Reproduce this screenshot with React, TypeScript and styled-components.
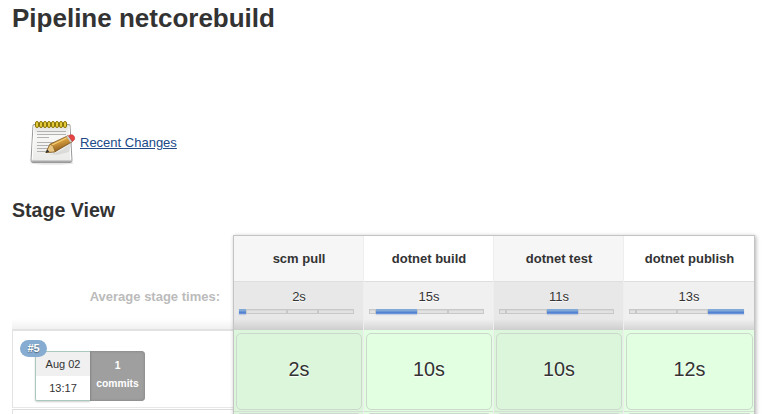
import React from 'react';
import styled, { createGlobalStyle } from 'styled-components';

const GlobalStyle = createGlobalStyle`
  *, *::before, *::after { box-sizing: border-box; }
  html, body { margin: 0; background: #fff; }
  body {
    font-family: "Liberation Sans", Arial, sans-serif;
    font-size: 13px;
    color: #333;
    overflow: hidden;
  }
`;

const Page = styled.main`
  height: 414px;
  padding: 0 12px;
  overflow: hidden;
`;

const Title = styled.h1`
  margin: 0;
  padding-top: 2px;
  height: 119px;
  font-size: 26px;
  line-height: 32px;
  white-space: nowrap;
`;

const ChangesRow = styled.div`
  display: flex;
  align-items: center;
  height: 48px;
  padding-left: 16px;
`;

const ChangesLink = styled.a`
  margin: 0 0 1px 4px;
  font-size: 13px;
  line-height: 16px;
  color: #204a87;
  text-decoration: underline;
`;

const Subtitle = styled.h2`
  margin: 0;
  padding-top: 31px;
  height: 68px;
  font-size: 19.6px;
  line-height: 24px;
`;

const StageView = styled.section`
  display: flex;
  height: 200px;
`;

const Runs = styled.div`
  width: 221px;
  flex: none;
`;

const AverageLabel = styled.div`
  height: 96px;
  padding: 54px 13px 0 0;
  text-align: right;
  font-weight: bold;
  line-height: 16px;
  color: #bbb;
  border-bottom: 2px solid #e2e2e2;
  background: linear-gradient(to top, #f1f1f1, #fff 10px);
`;

const Run = styled.div`
  height: 77px;
  border-left: 1px solid #e3e3e3;
  border-bottom: 1px solid #e8e8e8;
  padding: 20px 0 0 22px;
  display: flex;
`;

const NextRun = styled.div`
  height: 20px;
  margin-top: 1px;
  border-left: 1px solid #e3e3e3;
  border-top: 1px solid #ddd;
`;

const When = styled.div`
  position: relative;
  width: 55px;
  height: 50px;
  border: 1px solid #a9c9bc;
  border-right: 0;
  border-radius: 2px 0 0 2px;
  box-shadow: 0 1px 2px rgba(0, 0, 0, 0.2);
  text-align: center;
  font-size: 11px;
  line-height: 24px;
`;

const RunDate = styled.div`
  height: 24px;
  background: #f0f0f0;
`;

const RunNumber = styled.span`
  position: absolute;
  left: -16px;
  top: -12px;
  width: 27px;
  height: 17px;
  border-radius: 9px;
  background: #86acd1;
  color: #fff;
  font-size: 11px;
  font-weight: bold;
  line-height: 17px;
  text-shadow: 0 1px 1px rgba(0, 0, 0, 0.4);
`;

const Commits = styled.div`
  width: 55px;
  height: 50px;
  padding-top: 6px;
  border-radius: 0 4px 4px 0;
  background: #9f9f9f;
  box-shadow: inset 0 0 2px 1px #8e8e8e;
  color: #fff;
  text-align: center;
  font-size: 10.3px;
  font-weight: bold;
  line-height: 18px;
`;

const Board = styled.div`
  display: grid;
  grid-template-columns: repeat(4, 130px);
  width: 522px;
  flex: none;
  border: 1px solid #c4c4c4;
  border-bottom: 0;
  box-shadow: 1px 1px 4px rgba(0, 0, 0, 0.3);
`;

const Stage = styled.div<{ $shaded: boolean; $last: boolean }>`
  border-right: ${(p) => (p.$last ? 0 : 1)}px solid #eee;
  background: ${(p) => (p.$shaded ? '#dcf6dc' : '#e2ffe2')};
`;

const StageName = styled.div<{ $shaded: boolean }>`
  height: 46px;
  padding-left: 1px;
  border-bottom: 1px solid #dedede;
  background: ${(p) => (p.$shaded ? '#f6f6f6' : '#fff')};
  text-align: center;
  font-weight: bold;
  line-height: 45px;
`;

const Average = styled.div<{ $shaded: boolean }>`
  height: 48px;
  padding: 6px 0 0 5px;
  background: ${(p) =>
    p.$shaded
      ? 'linear-gradient(to top, #cecece, #e8e8e8 11px)'
      : 'linear-gradient(to top, #d5d5d5, #f0f0f0 11px)'};
`;

const AverageTime = styled.div`
  width: 120px;
  height: 21px;
  text-align: center;
  line-height: 17px;
  text-shadow: 0 1px 1px #fff;
`;

const Meter = styled.div`
  display: flex;
  width: 115px;
  height: 5px;
`;

const Segment = styled.span<{ $width: number; $active: boolean }>`
  width: ${(p) => p.$width}px;
  height: 5px;
  border: ${(p) => (p.$active ? 0 : 1)}px solid #c8c8c8;
  background: ${(p) =>
    p.$active ? 'linear-gradient(#81a9d8 0 2px, #5482d0 3px 4px, #7da1df 5px)' : '#e2e2e2'};
  box-shadow: ${(p) => (p.$active ? '0 1px 1px rgba(70, 110, 190, 0.25)' : 'inset 0 1px 0 #d8d8d8')};
`;

const Result = styled.div`
  height: 77px;
  margin: 3px 1px 0 2px;
  border: 1px solid #ccd8cc;
  border-radius: 5px;
  text-align: center;
  font-size: 19.8px;
  line-height: 71px;
  text-shadow: 0 1px 1px #fff;
`;

const NextResult = styled.div`
  height: 20px;
  margin-top: 1px;
  padding: 1px 1px 0 2px;
  border-top: 1px solid #d5ded5;

  &::before {
    content: "";
    display: block;
    height: 20px;
    border: 1px solid #ccd8cc;
    border-radius: 5px;
  }
`;

const Notepad = () => (
  <svg width="48" height="48" viewBox="0 0 48 48" aria-hidden="true">
    <defs>
      <linearGradient id="paper" x1="0" y1="0" x2="0" y2="1">
        <stop offset="0" stopColor="#dededc" />
        <stop offset="0.3" stopColor="#f8f8f7" />
        <stop offset="1" stopColor="#e9e9e8" />
      </linearGradient>
      <linearGradient id="wood" x1="0" y1="0" x2="0.45" y2="1">
        <stop offset="0" stopColor="#f0cb70" />
        <stop offset="0.5" stopColor="#d49b3c" />
        <stop offset="1" stopColor="#86551a" />
      </linearGradient>
    </defs>
    <ellipse cx="24" cy="44" rx="22" ry="1.8" fill="#000" opacity="0.1" />
    <path d="M6 5.5h35q1 0 1 1l2 35q0 2-2 2H5q-2 0-2-2l2-35q0-1 1-1z" fill="url(#paper)" stroke="#999" />
    <path d="M3.5 41.5h40q0 1.5-1 1.5h-38q-1 0-1-1.5z" fill="#aaa" />
    <path d="M6 7l-1.7 33.3M41 7l1.7 33.3" stroke="#fff" fill="none" />
    <path d="M9 12.5h29M9 15.5h29M9 18.5h12M9 23.5h28M9 26.5h20M9 29.5h13M9 32.5h11" stroke="#b2b2b2" strokeWidth="1" />
    {[9, 13, 17, 21, 25, 29, 33, 37].map((x) => (
      <g key={x}>
        <rect x={x - 1.5} y="2.5" width="3" height="6" rx="1.5" fill="#d8bd25" stroke="#8c7408" />
        <path d={`M${x} 3.5v4`} stroke="#eddb53" />
      </g>
    ))}
    <path d="M18 35q8 1 17-5l9-7-3 10-12 3z" fill="#555" opacity="0.13" />
    <path d="M18 33.5l4-8.3 18-8.5 4.2 6L27 32.8z" fill="url(#wood)" stroke="#775019" strokeWidth="0.8" strokeLinejoin="round" />
    <path d="M18 33.5l4-8.3 3.2 2 1.8 5.6z" fill="#e9c782" stroke="#775019" strokeWidth="0.5" />
    <path d="M17.5 34l1.7-3.4 2.2 2.2z" fill="#333" />
    <path d="M39.3 17l4 5.8" stroke="#cacaca" strokeWidth="2.2" />
    <path d="M40.5 16.7l1.8-.8q2.3-.7 3.7 1.3t.2 3.7l-1.8 1.6z" fill="#e84242" stroke="#c13b3b" strokeWidth="0.7" />
    <path d="M24 26l14.5-7" stroke="#f3ce75" strokeWidth="1.2" />
  </svg>
);

const segmentWidths = [7, 41, 31, 36];

const stages = [
  { name: 'scm pull', average: '2s', result: '2s' },
  { name: 'dotnet build', average: '15s', result: '10s' },
  { name: 'dotnet test', average: '11s', result: '10s' },
  { name: 'dotnet publish', average: '13s', result: '12s' },
];

export default function App() {
  return (
    <>
      <GlobalStyle />
      <Page>
        <Title>Pipeline netcorebuild</Title>
        <ChangesRow>
          <Notepad />
          <ChangesLink href="#changes">Recent Changes</ChangesLink>
        </ChangesRow>
        <Subtitle>Stage View</Subtitle>
        <StageView>
          <Runs>
            <AverageLabel>Average stage times:</AverageLabel>
            <Run>
              <When>
                <RunNumber>#5</RunNumber>
                <RunDate>Aug 02</RunDate>
                <div>13:17</div>
              </When>
              <Commits>
                <div>1</div>
                <div>commits</div>
              </Commits>
            </Run>
            <NextRun />
          </Runs>
          <Board>
            {stages.map((stage, index) => {
              const shaded = index % 2 === 0;
              return (
                <Stage key={stage.name} $shaded={shaded} $last={index === stages.length - 1}>
                  <StageName $shaded={shaded}>{stage.name}</StageName>
                  <Average $shaded={shaded}>
                    <AverageTime>{stage.average}</AverageTime>
                    <Meter>
                      {segmentWidths.map((width, i) => (
                        <Segment key={i} $width={width} $active={i === index} />
                      ))}
                    </Meter>
                  </Average>
                  <Result>{stage.result}</Result>
                  <NextResult />
                </Stage>
              );
            })}
          </Board>
        </StageView>
      </Page>
    </>
  );
}
